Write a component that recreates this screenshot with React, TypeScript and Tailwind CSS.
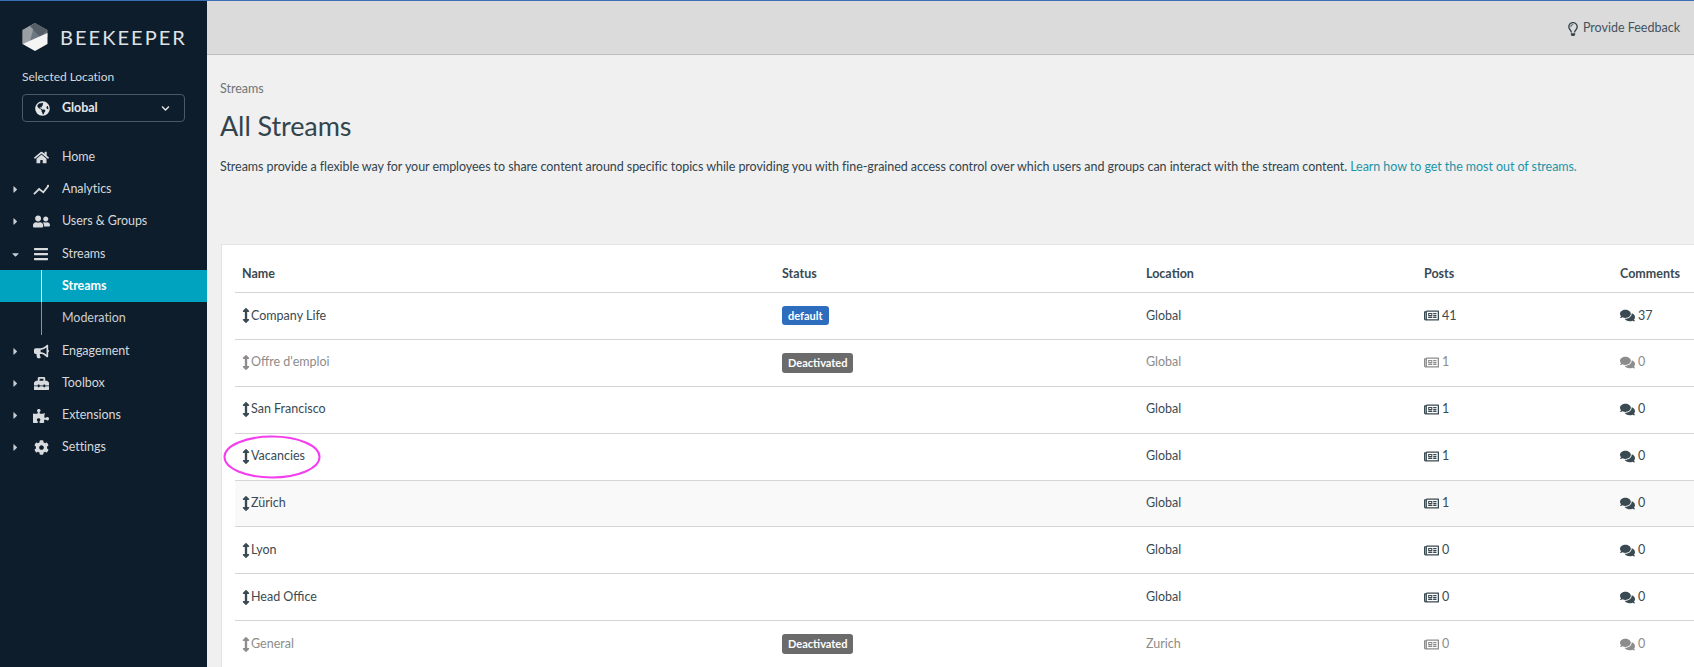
import React from "react";
import {
  FaHome,
  FaUserFriends,
  FaBars,
  FaBullhorn,
  FaToolbox,
  FaPuzzlePiece,
  FaCog,
  FaGlobeAmericas,
  FaChevronDown,
  FaRegLightbulb,
  FaCaretRight,
  FaCaretDown,
  FaArrowsAltV,
  FaComments,
  FaRegNewspaper,
} from "react-icons/fa";

const font = "font-['Lato','Noto_Sans',sans-serif]";

const LineIcon = ({ className }: { className?: string }) => (
  <svg className={className} width="1em" height="1em" viewBox="0 0 17 14" fill="none">
    <path d="M1 11.5L6.5 6L11 9.5L16 3" stroke="currentColor" strokeWidth="1.9" />
    <circle cx="16" cy="2.5" r="1.2" fill="currentColor" />
  </svg>
);

const navTop = [
  { label: "Home", icon: FaHome, size: "text-[15px]", caret: false },
  { label: "Analytics", icon: LineIcon, size: "text-[16px]", caret: true },
  { label: "Users & Groups", icon: FaUserFriends, size: "text-[17px]", caret: true },
];

const navBottom = [
  { label: "Engagement", icon: FaBullhorn, size: "text-[15px]" },
  { label: "Toolbox", icon: FaToolbox, size: "text-[15px]" },
  { label: "Extensions", icon: FaPuzzlePiece, size: "text-[16px]" },
  { label: "Settings", icon: FaCog, size: "text-[15px]" },
];

const rows = [
  { name: "Company Life", status: "default", location: "Global", posts: 41, comments: 37 },
  { name: "Offre d'emploi", status: "Deactivated", location: "Global", posts: 1, comments: 0 },
  { name: "San Francisco", location: "Global", posts: 1, comments: 0 },
  { name: "Vacancies", location: "Global", posts: 1, comments: 0 },
  { name: "Zürich", location: "Global", posts: 1, comments: 0 },
  { name: "Lyon", location: "Global", posts: 0, comments: 0 },
  { name: "Head Office", location: "Global", posts: 0, comments: 0 },
  { name: "General", status: "Deactivated", location: "Zurich", posts: 0, comments: 0 },
];

const Logo = () => (
  <svg width="26" height="28" viewBox="0 0 26 28">
    <path d="M13 0L25.5 7V14L0.5 21V7Z" fill="#6d7780" />
    <path d="M13 0L0.5 7V21L8 18Z" fill="#9a9fa4" />
    <path d="M13 0L25.5 7L18 14L8 3Z" fill="#565f68" />
    <path d="M25.5 10V21L13 28L0.5 21Z" fill="#f4f4f4" />
  </svg>
);

const NavRow = ({
  label,
  icon: Icon,
  size,
  caret,
  open,
}: {
  label: string;
  icon: React.ComponentType<{ className?: string }>;
  size: string;
  caret?: boolean;
  open?: boolean;
}) => (
  <div className="flex h-[32.2px] items-center text-[#d5d8db]">
    <span className="flex w-[31px] justify-center text-[11px] text-[#c9cdd1]">
      {caret && (open ? <FaCaretDown /> : <FaCaretRight />)}
    </span>
    <span className="flex w-[20px] justify-center">
      <Icon className={`${size} text-[#d9dcdf]`} />
    </span>
    <span className="ml-[11px]">{label}</span>
  </div>
);

const Badge = ({ text }: { text: string }) => (
  <span
    className={
      text === "default"
        ? "inline-block h-[19px] rounded-[3px] bg-[#2e6dbd] px-[6px] text-[11px] font-bold leading-[19px] text-white"
        : "inline-block h-[20px] rounded-[3px] bg-[#6b6b6b] px-[6px] text-[11px] font-bold leading-[20px] text-white"
    }
  >
    {text}
  </span>
);

export default function App() {
  return (
    <div className={`h-[667px] w-[1694px] overflow-hidden bg-[#f0f0f0] ${font}`}>
      <div className="h-[1px] bg-[#3a6fb5]" />
      <div className="flex h-[666px]">
        <aside className="w-[207px] shrink-0 bg-[#0d1d2c] text-[12.5px] tracking-[-0.05px]">
          <div className="flex items-center pl-[22px] pt-[22px]">
            <Logo />
            <span className="ml-[12px] text-[20px] leading-[28px] tracking-[2.05px] text-[#dfe2e4]">
              BEEKEEPER
            </span>
          </div>
          <div className="pl-[22px] pt-[17px] text-[12px] leading-[18px] text-[#d5d8db]">
            Selected Location
          </div>
          <div className="ml-[22px] mt-[8px] flex h-[28px] w-[163px] items-center rounded-[4px] border border-[#4a5867] pl-[12px] pr-[14px] text-[#e4e6e8]">
            <FaGlobeAmericas className="text-[15px]" />
            <span className="ml-[12px] flex-1 font-bold">Global</span>
            <FaChevronDown className="text-[9px]" />
          </div>
          <nav className="pt-[19.4px]">
            {navTop.map((n) => (
              <NavRow key={n.label} label={n.label} icon={n.icon} size={n.size} caret={n.caret} />
            ))}
            <NavRow label="Streams" icon={FaBars} size="text-[16px]" caret open />
            <div className="h-[32px] bg-[#00a3bf] pl-[41px]">
              <div className="flex h-full items-center border-l border-white pl-[20px] font-bold text-white">
                Streams
              </div>
            </div>
            <div className="ml-[41px] flex h-[33px] items-center border-l border-[#8a939b] pl-[20px] text-[#c9cdd1]">
              Moderation
            </div>
            {navBottom.map((n) => (
              <NavRow key={n.label} label={n.label} icon={n.icon} size={n.size} caret />
            ))}
          </nav>
        </aside>

        <main className="min-w-0 flex-1">
          <header className="flex h-[54px] items-center justify-end border-b border-[#bfbfbf] bg-[#dbdbdb] pr-[14px] pt-[2px] text-[12.5px] text-[#45535f]">
            <FaRegLightbulb className="mr-[3px] text-[14px] text-[#33444c]" />
            Provide Feedback
          </header>
          <div className="px-[13px] pt-[26px] text-[#33444c]">
            <div className="text-[12.5px] leading-[16px] text-[#6f7577]">Streams</div>
            <h1 className="mt-[11px] text-[27px] leading-[36px] tracking-[-0.1px]">All Streams</h1>
            <p className="mt-[14px] whitespace-nowrap text-[12.5px] leading-[18px] tracking-[-0.06px]">
              Streams provide a flexible way for your employees to share content around specific topics while providing
              you with fine-grained access control over which users and groups can interact with the stream content.{" "}
              <span className="text-[#1d94a8]">Learn how to get the most out of streams.</span>
            </p>
          </div>
          <section className="relative ml-[14px] mt-[68px] w-[1600px] border border-[#e3e3e3] bg-white px-[13px] text-[12.5px] text-[#3a4a52]">
            <div className="grid h-[48px] grid-cols-[540px_365px_278px_196px_1fr] items-center border-b border-[#d5d5d5] pt-[12px] font-bold">
              <div className="pl-[7px]">Name</div>
              <div className="pl-[7px]">Status</div>
              <div className="pl-[6px]">Location</div>
              <div className="pl-[6px]">Posts</div>
              <div className="pl-[6px]">Comments</div>
            </div>
            {rows.map((r) => (
              <div
                key={r.name}
                className={
                  "grid h-[46.9px] grid-cols-[540px_365px_278px_196px_1fr] items-center border-b border-[#d5d5d5] " +
                  (r.status === "Deactivated" ? "text-[#8c8c8c] " : "") +
                  (r.name === "Zürich" ? "bg-[#f9f9f9]" : "")
                }
              >
                <div className="flex items-center pl-[7px]">
                  <FaArrowsAltV className="w-[8px] text-[15px]" />
                  <span className="ml-[1px]">{r.name}</span>
                </div>
                <div className="pl-[7px]">{r.status && <Badge text={r.status} />}</div>
                <div className="pl-[6px]">{r.location}</div>
                <div className="flex items-center pl-[6px]">
                  <FaRegNewspaper className="text-[15px]" />
                  <span className="ml-[3px]">{r.posts}</span>
                </div>
                <div className="flex items-center pl-[6px]">
                  <FaComments className="text-[15px]" />
                  <span className="ml-[3px]">{r.comments}</span>
                </div>
              </div>
            ))}
            <svg
              className="pointer-events-none absolute left-0 top-[190px]"
              width="100"
              height="44"
              viewBox="0 0 100 44"
            >
              <ellipse cx="50" cy="22" rx="47.5" ry="20.5" fill="none" stroke="#f53df0" strokeWidth="2" />
            </svg>
          </section>
        </main>
      </div>
    </div>
  );
}
